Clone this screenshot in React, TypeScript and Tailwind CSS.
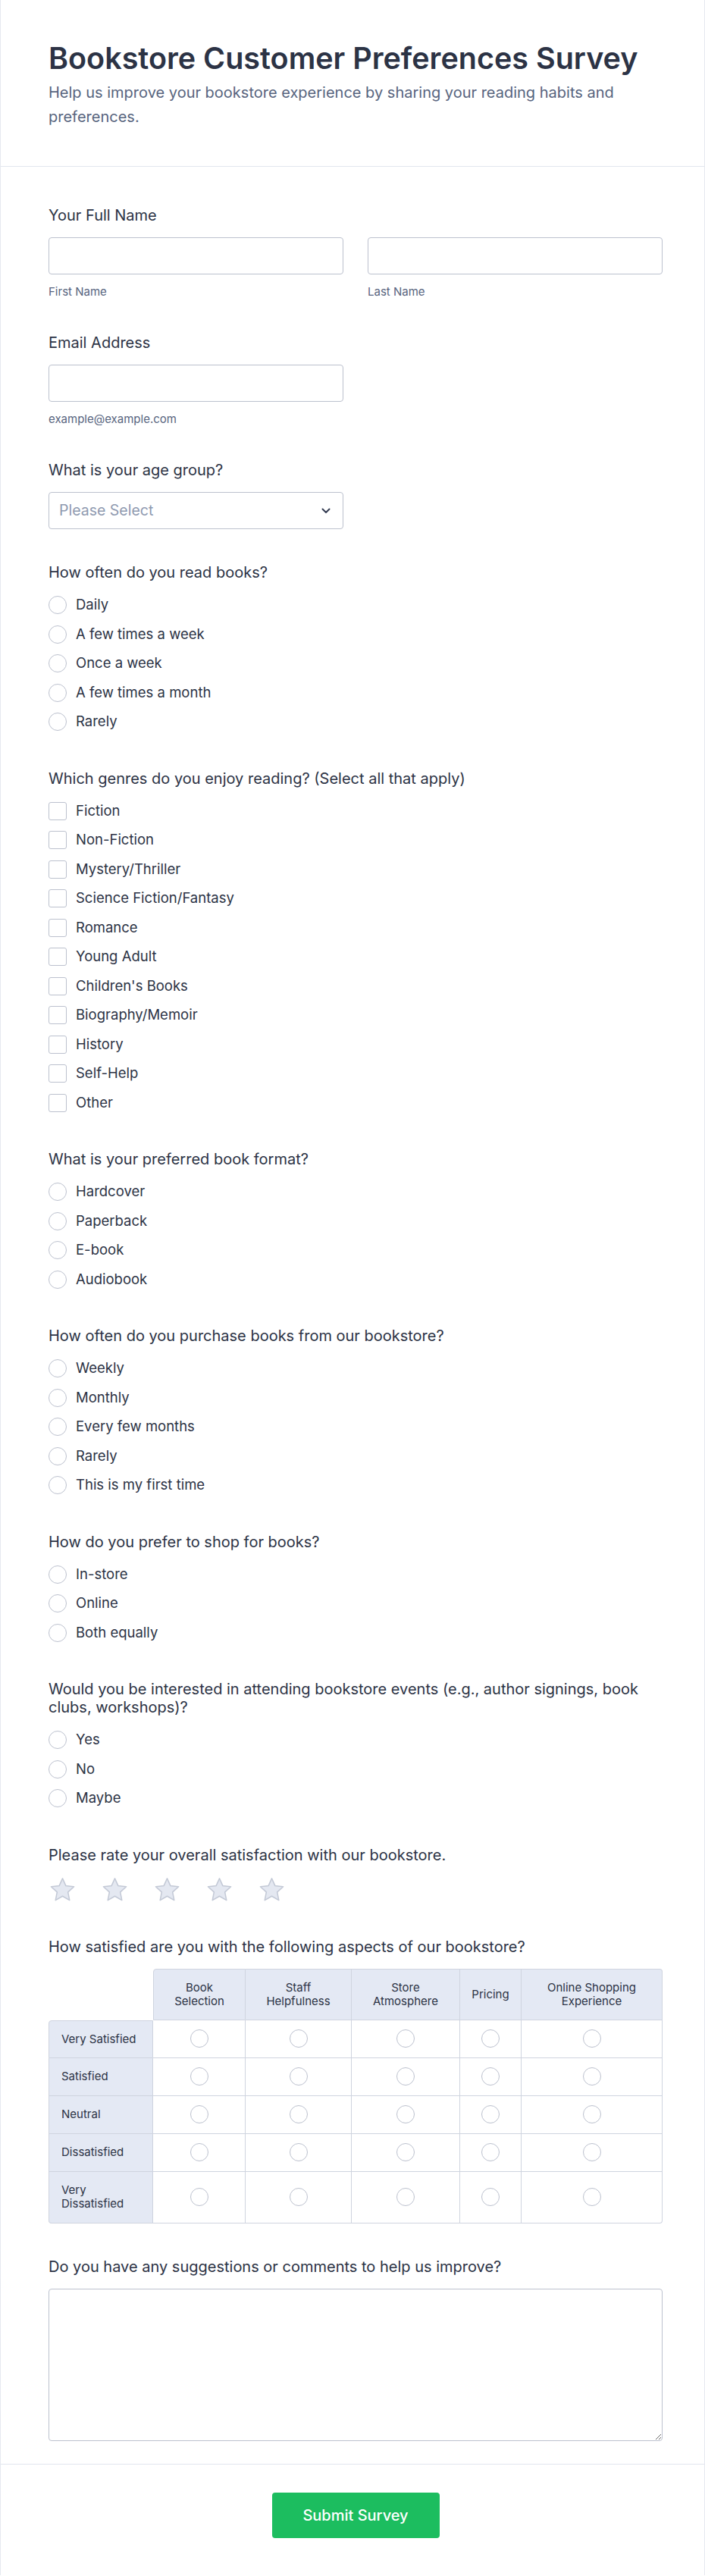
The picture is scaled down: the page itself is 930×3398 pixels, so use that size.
import React from "react";

const ink = "text-[#2c3345]";

function Label({ children }: { children: React.ReactNode }) {
  return <div className={`text-xl leading-6 ${ink} mb-[17px]`}>{children}</div>;
}

function Radio() {
  return <span className="w-6 h-6 shrink-0 rounded-full border-[1.5px] border-[#bcc1ce] bg-white" />;
}

function Checkbox() {
  return <span className="w-6 h-6 shrink-0 rounded-[3px] border-[1.5px] border-[#bcc1ce] bg-white" />;
}

function Options({ items, box }: { items: string[]; box?: boolean }) {
  return (
    <div className="flex flex-col gap-[10.5px] pb-[3.5px]">
      {items.map((t) => (
        <label key={t} className="flex items-center gap-3 h-7">
          {box ? <Checkbox /> : <Radio />}
          <span className={`text-[18.5px] ${ink}`}>{t}</span>
        </label>
      ))}
    </div>
  );
}

function Star() {
  return (
    <svg width="37" height="35" viewBox="0 0 24 23" fill="none">
      <path
        d="M12 1.2 L14.9 7.6 L21.9 8.4 L16.7 13.1 L18.1 20.1 L12 16.6 L5.9 20.1 L7.3 13.1 L2.1 8.4 L9.1 7.6 Z"
        fill="#e4e8f1"
        stroke="#c3c9d6"
        strokeWidth="1"
        strokeLinejoin="round"
      />
    </svg>
  );
}

const columns = ["Book Selection", "Staff Helpfulness", "Store Atmosphere", "Pricing", "Online Shopping Experience"];
const rows = ["Very Satisfied", "Satisfied", "Neutral", "Dissatisfied", "Very Dissatisfied"];
const headLines: Record<string, string[]> = {
  "Book Selection": ["Book", "Selection"],
  "Staff Helpfulness": ["Staff", "Helpfulness"],
  "Store Atmosphere": ["Store", "Atmosphere"],
  Pricing: ["Pricing"],
  "Online Shopping Experience": ["Online Shopping", "Experience"],
};

function Matrix() {
  return (
    <div className="grid grid-cols-[138px_122px_140px_143px_81px_1fr]">
      <div />
      {columns.map((c, i) => (
        <div
          key={c}
          className={`h-[68px] flex flex-col items-center justify-center text-center text-[15px] leading-[18px] ${ink} bg-[#e4e9f4] border-t border-b border-r border-[#cfd4df] ${
            i === 0 ? "border-l rounded-tl" : ""
          } ${i === columns.length - 1 ? "rounded-tr" : ""}`}
        >
          {headLines[c].map((l) => (
            <span key={l}>{l}</span>
          ))}
        </div>
      ))}
      {rows.map((r, ri) => (
        <React.Fragment key={r}>
          <div
            className={`${ri === rows.length - 1 ? "h-[68px] rounded-bl" : "h-[50px]"} ${
              ri === 0 ? "border-t rounded-tl" : ""
            } flex items-center pl-4 pr-3 text-[15px] leading-[18px] ${ink} bg-[#e4e9f4] border-l border-b border-r border-[#cfd4df]`}
          >
            {r}
          </div>
          {columns.map((c, ci) => (
            <div
              key={c}
              className={`flex items-center justify-center bg-white border-b border-r border-[#cfd4df] ${
                ri === rows.length - 1 && ci === columns.length - 1 ? "rounded-br" : ""
              }`}
            >
              <Radio />
            </div>
          ))}
        </React.Fragment>
      ))}
    </div>
  );
}

export default function App() {
  return (
    <div className="bg-white border-x border-[#e6e9ef] font-[family-name:Inter,sans-serif]">
      <header className="pl-[63px] pr-[55px] pt-[55px] pb-[49px] border-b border-[#e2e6ee]">
        <h1 className={`text-[39.5px] leading-[44px] font-semibold ${ink}`}>Bookstore Customer Preferences Survey</h1>
        <p className="mt-[7px] text-xl leading-8 text-[#57647e]">
          Help us improve your bookstore experience by sharing your reading habits and preferences.
        </p>
      </header>

      <form className="pl-[63px] pr-[55px] pt-[52px] pb-[30px] flex flex-col gap-[45px]">
        <section>
          <Label>Your Full Name</Label>
          <div className="grid grid-cols-2 gap-8">
            <div>
              <input className="w-full h-[49px] rounded border border-[#bcc1ce] px-3" />
              <div className="mt-[13px] text-[15px] leading-5 text-[#57647e]">First Name</div>
            </div>
            <div>
              <input className="w-full h-[49px] rounded border border-[#bcc1ce] px-3" />
              <div className="mt-[13px] text-[15px] leading-5 text-[#57647e]">Last Name</div>
            </div>
          </div>
        </section>

        <section>
          <Label>Email Address</Label>
          <div className="grid grid-cols-2 gap-8">
            <div>
              <input className="w-full h-[49px] rounded border border-[#bcc1ce] px-3" />
              <div className="mt-[13px] text-[15px] leading-5 text-[#57647e]">example@example.com</div>
            </div>
          </div>
        </section>

        <section>
          <Label>What is your age group?</Label>
          <div className="grid grid-cols-2 gap-8">
            <div className="h-[49px] rounded border border-[#bcc1ce] pl-[13px] pr-4 flex items-center justify-between">
              <span className="text-[19.5px] text-[#8f9ab0]">Please Select</span>
              <svg width="12" height="8" viewBox="0 0 12 8" fill="none">
                <path d="M1.5 1.5 L6 6 L10.5 1.5" stroke="#343c52" strokeWidth="2" strokeLinecap="round" strokeLinejoin="round" />
              </svg>
            </div>
          </div>
        </section>

        <section>
          <Label>How often do you read books?</Label>
          <Options items={["Daily", "A few times a week", "Once a week", "A few times a month", "Rarely"]} />
        </section>

        <section>
          <Label>Which genres do you enjoy reading? (Select all that apply)</Label>
          <Options
            box
            items={[
              "Fiction",
              "Non-Fiction",
              "Mystery/Thriller",
              "Science Fiction/Fantasy",
              "Romance",
              "Young Adult",
              "Children's Books",
              "Biography/Memoir",
              "History",
              "Self-Help",
              "Other",
            ]}
          />
        </section>

        <section>
          <Label>What is your preferred book format?</Label>
          <Options items={["Hardcover", "Paperback", "E-book", "Audiobook"]} />
        </section>

        <section>
          <Label>How often do you purchase books from our bookstore?</Label>
          <Options items={["Weekly", "Monthly", "Every few months", "Rarely", "This is my first time"]} />
        </section>

        <section>
          <Label>How do you prefer to shop for books?</Label>
          <Options items={["In-store", "Online", "Both equally"]} />
        </section>

        <section>
          <Label>
            Would you be interested in attending bookstore events (e.g., author signings, book clubs, workshops)?
          </Label>
          <Options items={["Yes", "No", "Maybe"]} />
        </section>

        <section>
          <Label>Please rate your overall satisfaction with our bookstore.</Label>
          <div className="flex gap-8">
            {[0, 1, 2, 3, 4].map((i) => (
              <Star key={i} />
            ))}
          </div>
        </section>

        <section>
          <Label>How satisfied are you with the following aspects of our bookstore?</Label>
          <Matrix />
        </section>

        <section>
          <Label>Do you have any suggestions or comments to help us improve?</Label>
          <textarea className="block w-full h-[201px] rounded border border-[#bcc1ce] p-3" />
        </section>
      </form>

      <footer className="border-t border-[#e2e6ee] pt-[37px] pb-[49px] pl-[63px] pr-[55px] flex justify-center">
        <button className="w-[221px] h-[60px] rounded bg-[#1cbd5f] text-white text-xl font-medium">Submit Survey</button>
      </footer>
    </div>
  );
}
